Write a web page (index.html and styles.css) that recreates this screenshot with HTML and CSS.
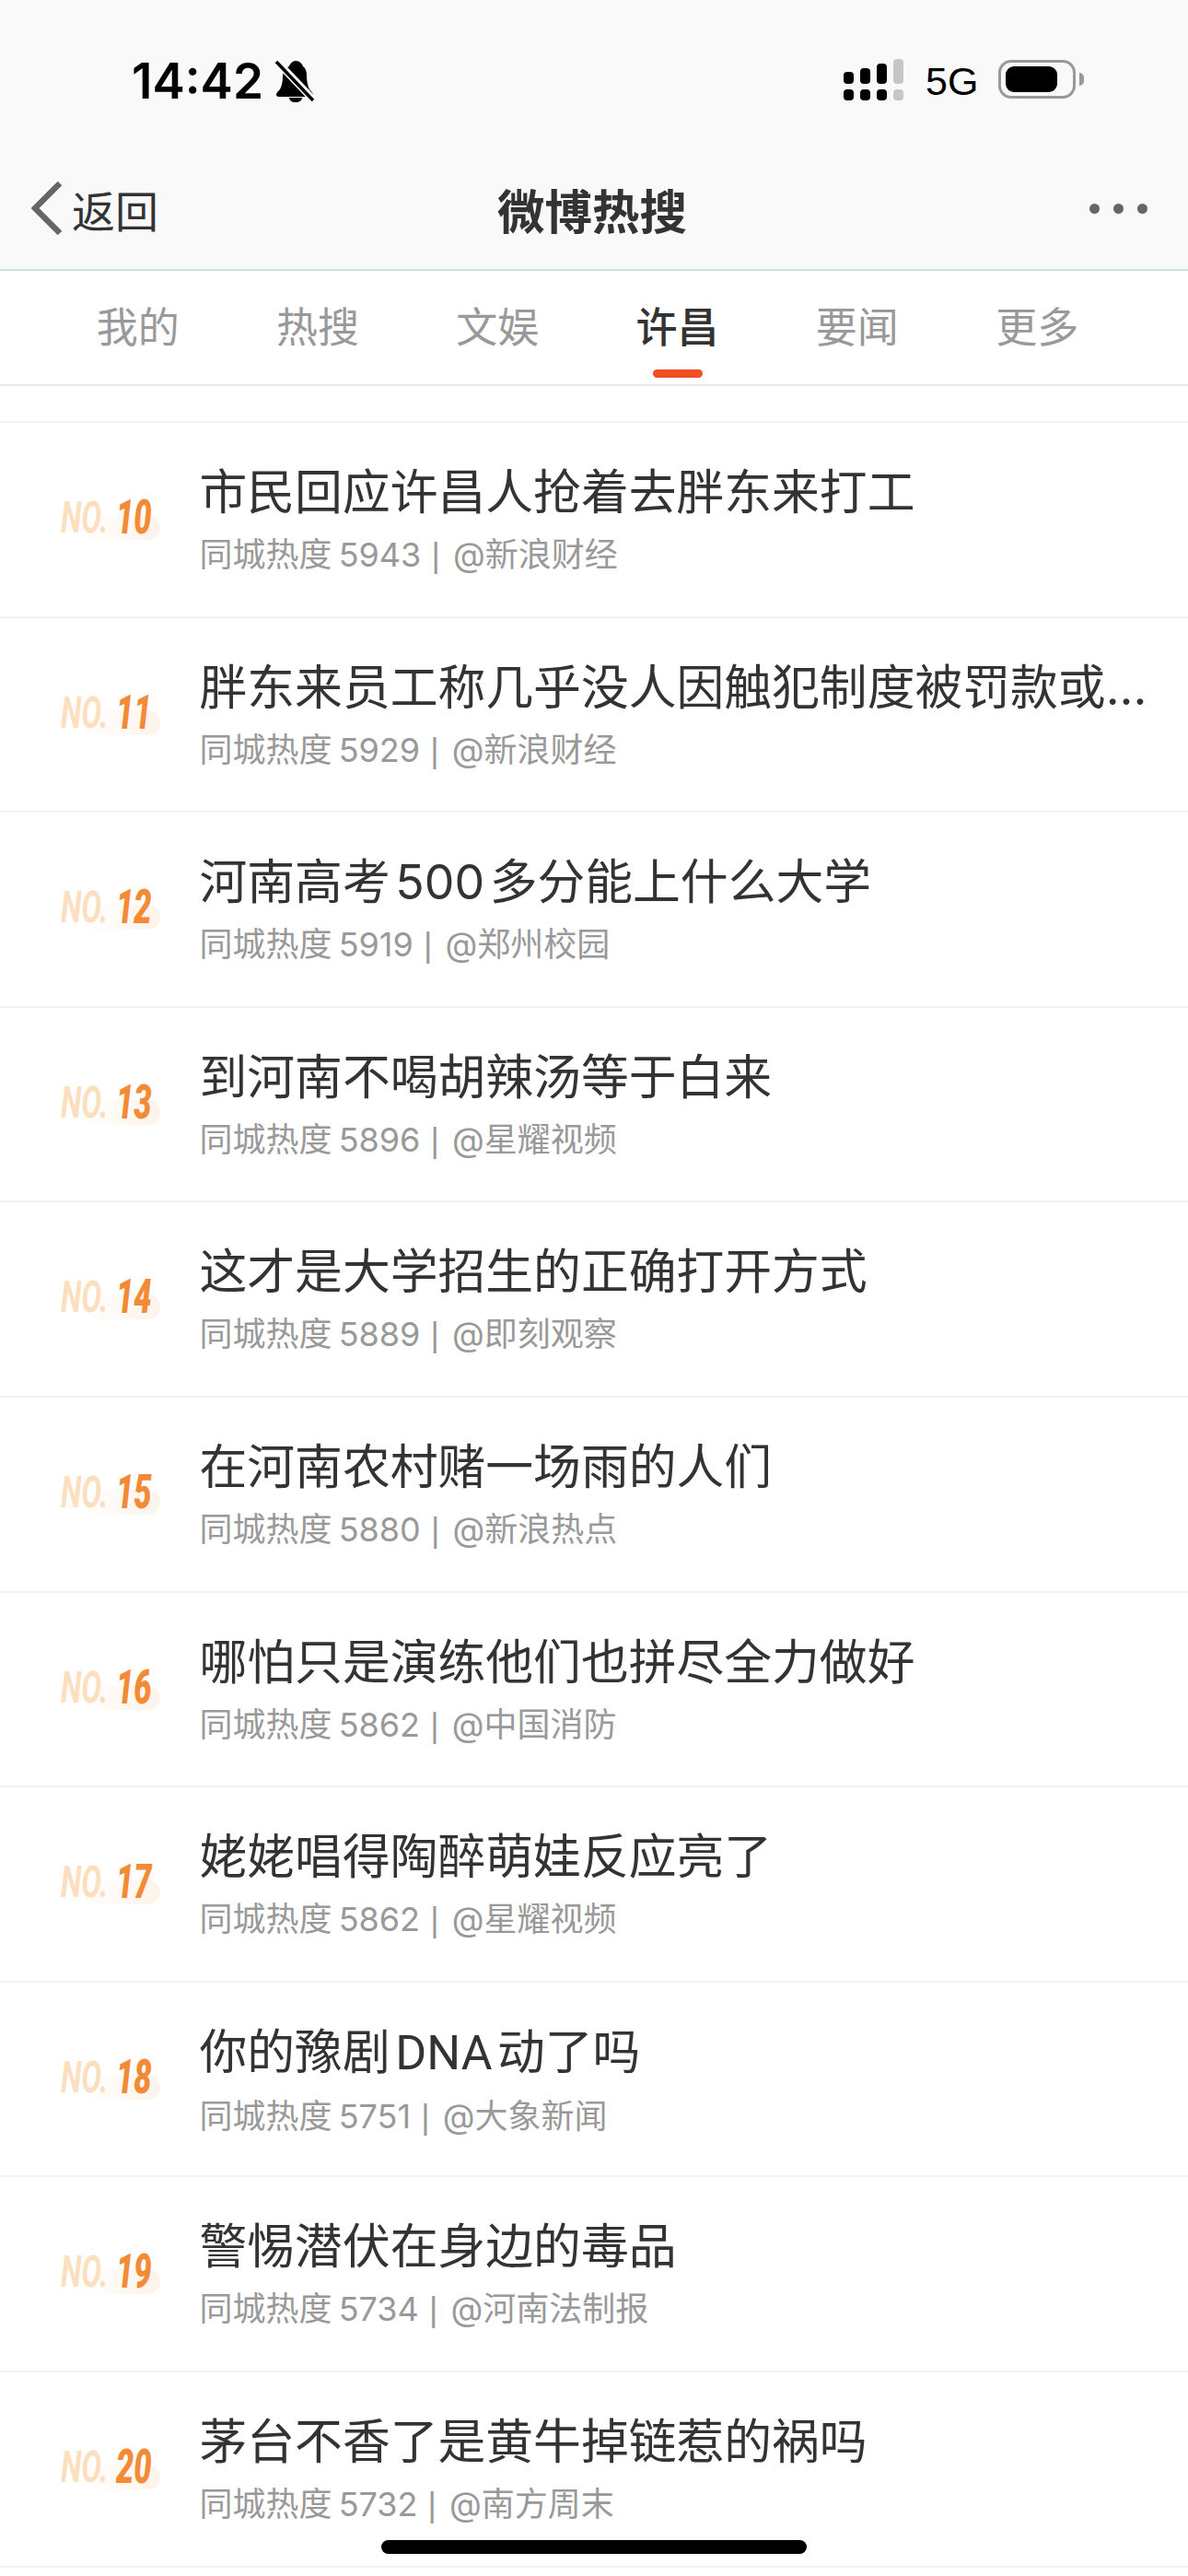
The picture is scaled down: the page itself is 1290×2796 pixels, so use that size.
FILE: index.html
```html
<!DOCTYPE html>
<html lang="zh">
<head>
    <meta charset="UTF-8">
    <meta name="viewport" content="width=device-width, initial-scale=1.0">
    <title>微博热搜</title>
    <link rel="stylesheet" href="styles.css">
</head>
<body>

    <div class="header">
        <div class="status-bar">
            <div class="status-left">
                <span class="time">14:42</span>
                <svg class="bell" viewBox="0 0 42 46" width="42" height="46">
                    <path d="M22 1c4 0 7 3 8 6 3 2 4 6 4 10 0 6 1 11 3 15 2 2 4 4 4 6 0 1-1 2-3 2H4c-2 0-3-1-3-2 0-2 2-4 4-6 2-4 3-8 3-14 0-5 3-9 7-11 1-3 4-6 7-6z"/>
                    <path d="M15 41h14c0 3-3 5-7 5s-7-2-7-5z"/>
                    <path class="bell-gap" d="M0 0l42 44"/>
                    <path class="bell-slash" d="M1 2l40 42"/>
                </svg>
            </div>
            <div class="status-right">
                <div class="signal">
                    <div class="signal-col"><i class="bar-1"></i><i class="dot"></i></div>
                    <div class="signal-col"><i class="bar-2"></i><i class="dot"></i></div>
                    <div class="signal-col"><i class="bar-3"></i><i class="dot"></i></div>
                    <div class="signal-col off"><i class="bar-4"></i><i class="dot"></i></div>
                </div>
                <span class="net">5G</span>
                <div class="battery">
                    <div class="battery-body"><div class="battery-fill"></div></div>
                    <div class="battery-cap"></div>
                </div>
            </div>
        </div>

        <div class="nav-bar">
            <div class="nav-back">
                <svg class="chevron" viewBox="0 0 34 60" width="34" height="60">
                    <path d="M31 3L4 30l27 27"/>
                </svg>
                <span>返回</span>
            </div>
            <div class="nav-title">微博热搜</div>
            <div class="nav-more"><i></i><i></i><i></i></div>
        </div>
    </div>

    <div class="tabs">
        <div class="tab">我的</div>
        <div class="tab">热搜</div>
        <div class="tab">文娱</div>
        <div class="tab active">许昌</div>
        <div class="tab">要闻</div>
        <div class="tab">更多</div>
    </div>

    <div class="list">
        <div class="item">
            <div class="rank"><span class="rank-no">NO.</span><span class="rank-num">10</span></div>
            <div class="item-text">
                <div class="item-title">市民回应许昌人抢着去胖东来打工</div>
                <div class="item-sub">同城热度 5943 <span class="sep">|</span> @新浪财经</div>
            </div>
        </div>
        <div class="item">
            <div class="rank"><span class="rank-no">NO.</span><span class="rank-num">11</span></div>
            <div class="item-text">
                <div class="item-title">胖东来员工称几乎没人因触犯制度被罚款或...</div>
                <div class="item-sub">同城热度 5929 <span class="sep">|</span> @新浪财经</div>
            </div>
        </div>
        <div class="item">
            <div class="rank"><span class="rank-no">NO.</span><span class="rank-num">12</span></div>
            <div class="item-text">
                <div class="item-title">河南高考 500 多分能上什么大学</div>
                <div class="item-sub">同城热度 5919 <span class="sep">|</span> @郑州校园</div>
            </div>
        </div>
        <div class="item">
            <div class="rank"><span class="rank-no">NO.</span><span class="rank-num">13</span></div>
            <div class="item-text">
                <div class="item-title">到河南不喝胡辣汤等于白来</div>
                <div class="item-sub">同城热度 5896 <span class="sep">|</span> @星耀视频</div>
            </div>
        </div>
        <div class="item">
            <div class="rank"><span class="rank-no">NO.</span><span class="rank-num">14</span></div>
            <div class="item-text">
                <div class="item-title">这才是大学招生的正确打开方式</div>
                <div class="item-sub">同城热度 5889 <span class="sep">|</span> @即刻观察</div>
            </div>
        </div>
        <div class="item">
            <div class="rank"><span class="rank-no">NO.</span><span class="rank-num">15</span></div>
            <div class="item-text">
                <div class="item-title">在河南农村赌一场雨的人们</div>
                <div class="item-sub">同城热度 5880 <span class="sep">|</span> @新浪热点</div>
            </div>
        </div>
        <div class="item">
            <div class="rank"><span class="rank-no">NO.</span><span class="rank-num">16</span></div>
            <div class="item-text">
                <div class="item-title">哪怕只是演练他们也拼尽全力做好</div>
                <div class="item-sub">同城热度 5862 <span class="sep">|</span> @中国消防</div>
            </div>
        </div>
        <div class="item">
            <div class="rank"><span class="rank-no">NO.</span><span class="rank-num">17</span></div>
            <div class="item-text">
                <div class="item-title">姥姥唱得陶醉萌娃反应亮了</div>
                <div class="item-sub">同城热度 5862 <span class="sep">|</span> @星耀视频</div>
            </div>
        </div>
        <div class="item">
            <div class="rank"><span class="rank-no">NO.</span><span class="rank-num">18</span></div>
            <div class="item-text">
                <div class="item-title">你的豫剧 <span class="latin">DNA</span> 动了吗</div>
                <div class="item-sub">同城热度 5751 <span class="sep">|</span> @大象新闻</div>
            </div>
        </div>
        <div class="item">
            <div class="rank"><span class="rank-no">NO.</span><span class="rank-num">19</span></div>
            <div class="item-text">
                <div class="item-title">警惕潜伏在身边的毒品</div>
                <div class="item-sub">同城热度 5734 <span class="sep">|</span> @河南法制报</div>
            </div>
        </div>
        <div class="item">
            <div class="rank"><span class="rank-no">NO.</span><span class="rank-num">20</span></div>
            <div class="item-text">
                <div class="item-title">茅台不香了是黄牛掉链惹的祸吗</div>
                <div class="item-sub">同城热度 5732 <span class="sep">|</span> @南方周末</div>
            </div>
        </div>
    </div>

    <div class="home-bar"></div>

</body>
</html>
```

FILE: styles.css
```css
html, body {
    height: 2796px;
    overflow: hidden;
}

body {
    font-family: Inter, "Noto Sans CJK SC", sans-serif;
    background-color: #fff;
    color: #333;
    margin: 0;
    padding: 0;
    position: relative;
}

/* header */
.header {
    background-color: #f9f9f9;
    height: 292px;
    border-bottom: 2px solid #cbe2d6;
}

.status-bar {
    height: 160px;
    display: flex;
    justify-content: space-between;
    padding: 64px 113px 0 143px;
    box-sizing: border-box;
}

.status-left {
    display: flex;
    align-items: flex-start;
    gap: 13px;
    height: 48px;
    color: #000;
}

.time {
    font-size: 53px;
    font-weight: 600;
    line-height: 48px;
    margin-top: 0;
}

.bell {
    margin-top: 1px;
}

.bell-gap {
    fill: none;
    stroke: #f9f9f9;
    stroke-width: 8;
}

.bell-slash {
    fill: none;
    stroke: #000;
    stroke-width: 3.5;
}

.status-right {
    display: flex;
    align-items: flex-start;
    height: 46px;
}

.signal {
    display: flex;
    gap: 7px;
    margin-right: 24px;
    width: 65px;
}

.signal-col {
    width: 11px;
    height: 45px;
    display: flex;
    flex-direction: column;
    justify-content: flex-end;
    gap: 6px;
}

.signal-col i {
    display: block;
    background-color: #000;
    border-radius: 4px;
}

.signal-col.off i {
    background-color: #c6c6c6;
}

.signal-col .dot {
    height: 12px;
}

.bar-1 {
    height: 13px;
}

.bar-2 {
    height: 17px;
}

.bar-3 {
    height: 22px;
}

.bar-4 {
    height: 27px;
}

.net {
    font-family: "Liberation Sans", sans-serif;
    font-size: 43px;
    line-height: 46px;
    color: #000;
    width: 79px;
    margin-top: 1px;
}

.battery {
    display: flex;
    align-items: center;
    margin-top: 1px;
}

.battery-body {
    width: 84px;
    height: 42px;
    border: 3px solid #999;
    border-radius: 14px;
    box-sizing: border-box;
    padding: 4px 5px;
}

.battery-fill {
    width: 56px;
    height: 28px;
    background-color: #000;
    border-radius: 9px;
}

.battery-cap {
    width: 5px;
    height: 14px;
    margin-left: 4px;
    background-color: #999;
    border-radius: 0 7px 7px 0;
}

.nav-bar {
    height: 132px;
    display: grid;
    grid-template-columns: 1fr auto 1fr;
    align-items: center;
    padding: 0 44px 0 34px;
}

.nav-back {
    display: flex;
    align-items: center;
    gap: 10px;
    font-size: 47px;
}

.chevron {
    fill: none;
    stroke: #666;
    stroke-width: 6.5;
}

.nav-title {
    font-size: 51.5px;
    font-weight: 700;
    margin-left: 6px;
}

.nav-more {
    display: flex;
    justify-content: flex-end;
    gap: 15px;
}

.nav-more i {
    width: 11px;
    height: 11px;
    border-radius: 50%;
    background-color: #666;
}

/* tabs */
.tabs {
    height: 123px;
    display: flex;
    padding: 0 52px;
    border-bottom: 2px solid #e8e8e8;
    box-sizing: content-box;
}

.tab {
    width: 195.3px;
    text-align: center;
    font-size: 45px;
    line-height: 60px;
    padding-top: 32px;
    color: #999;
    position: relative;
}

.tab.active {
    color: #333;
    font-weight: 500;
}

.tab.active::after {
    content: "";
    position: absolute;
    left: 50%;
    top: 107px;
    width: 54px;
    height: 9px;
    margin-left: -27px;
    border-radius: 5px;
    background-color: #f04e23;
}

/* list */
.list {
    margin-top: 38px;
    border-top: 2px solid #f2f2f2;
}

.item {
    height: 211.6px;
    box-sizing: border-box;
    border-bottom: 2px solid #f2f2f2;
    display: flex;
    align-items: flex-start;
}

.rank {
    width: 150.5px;
    margin: 76px 0 0 66px;
    height: 50px;
    display: flex;
    align-items: flex-end;
    position: relative;
    font-family: Roboto, sans-serif;
    font-weight: 700;
    font-style: italic;
    flex-shrink: 0;
}

.rank::before {
    content: "";
    position: absolute;
    left: 24px;
    top: 24px;
    width: 84px;
    height: 27px;
    border-radius: 0 14px 14px 0;
    background: linear-gradient(to right, #fff, #fdf3e9);
}

.rank-no, .rank-num {
    display: inline-block;
    position: relative;
    transform-origin: left bottom;
    line-height: 46px;
}

.rank-no {
    width: 60px;
    font-size: 48px;
    color: #fbdfbe;
    transform: scaleX(0.68);
}

.rank-num {
    font-size: 52px;
    font-weight: 900;
    color: #f38a36;
    transform: scaleX(0.66);
}

.item-text {
    padding-top: 42px;
    white-space: nowrap;
}

.item-title {
    font-size: 51.8px;
    line-height: 66px;
    word-spacing: -9px;
}

.latin {
    font-family: Roboto, sans-serif;
}

.item-sub {
    font-size: 36px;
    line-height: 44px;
    margin-top: 13px;
    color: #999;
    word-spacing: -3px;
}

.sep {
    font-family: "Liberation Sans", sans-serif;
    margin: 0 7px 0 4px;
}

.home-bar {
    position: absolute;
    left: 414px;
    top: 2757px;
    width: 462px;
    height: 15px;
    border-radius: 8px;
    background-color: #000;
}
```
